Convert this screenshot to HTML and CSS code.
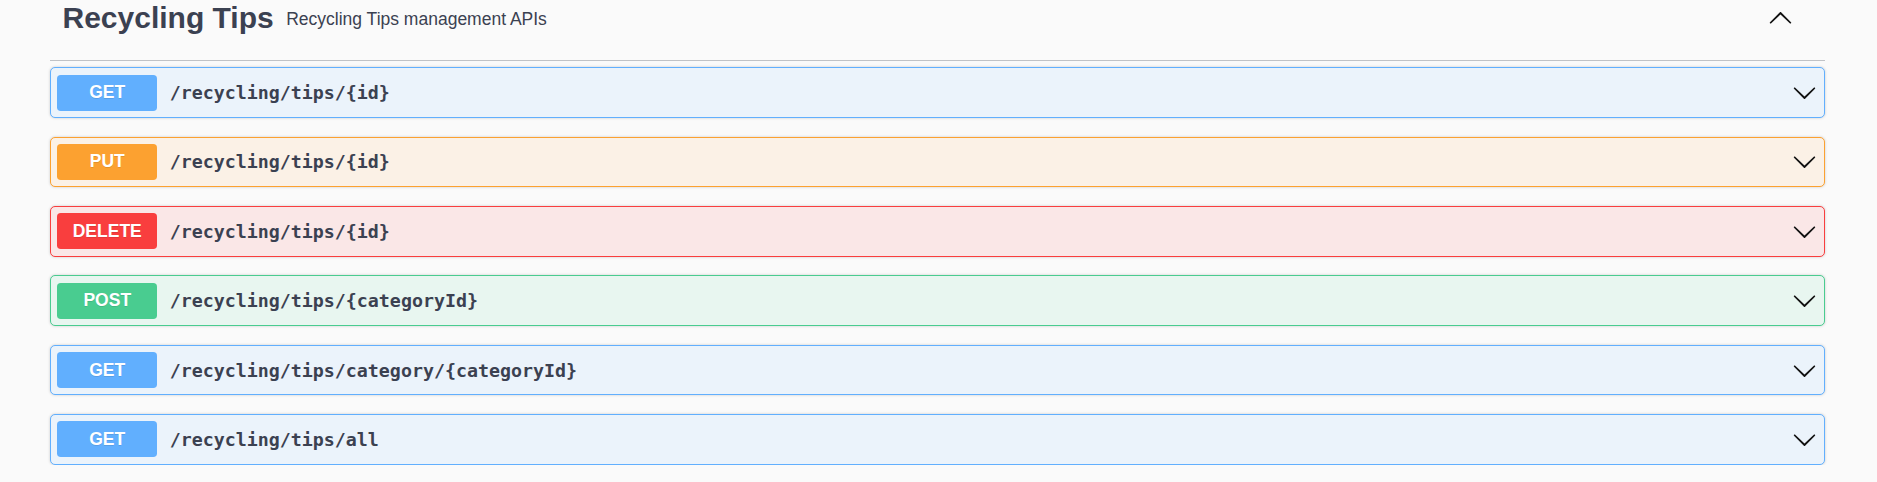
FILE: index.html
```html
<!DOCTYPE html>
<html>
<head>
<meta charset="utf-8">
<link rel="stylesheet" href="styles.css">
</head>
<body>
<div class="wrapper">
  <h3 class="tag">
    <span class="tag-name">Recycling Tips</span>
    <small class="tag-desc">Recycling Tips management APIs</small>
    <button class="expand">
      <svg class="arrow up" width="25" height="25" viewBox="0 0 20 20"><path d="M17.418 6.109c.272-.268.709-.268.979 0s.271.701 0 .969l-7.908 7.830c-.27.268-.707.268-.979 0l-7.908-7.83c-.27-.268-.27-.701 0-.969.271-.268.709-.268.979 0L10 13.25l7.418-7.141z"/></svg>
    </button>
  </h3>
  <div class="ops">
    <div class="op get">
      <span class="method">GET</span>
      <span class="path">/recycling/tips/{id}</span>
      <svg class="arrow" width="25" height="25" viewBox="0 0 20 20"><path d="M17.418 6.109c.272-.268.709-.268.979 0s.271.701 0 .969l-7.908 7.83c-.27.268-.707.268-.979 0l-7.908-7.83c-.27-.268-.27-.701 0-.969.271-.268.709-.268.979 0L10 13.25l7.418-7.141z"/></svg>
    </div>
    <div class="op put">
      <span class="method">PUT</span>
      <span class="path">/recycling/tips/{id}</span>
      <svg class="arrow" width="25" height="25" viewBox="0 0 20 20"><path d="M17.418 6.109c.272-.268.709-.268.979 0s.271.701 0 .969l-7.908 7.83c-.27.268-.707.268-.979 0l-7.908-7.83c-.27-.268-.27-.701 0-.969.271-.268.709-.268.979 0L10 13.25l7.418-7.141z"/></svg>
    </div>
    <div class="op delete">
      <span class="method">DELETE</span>
      <span class="path">/recycling/tips/{id}</span>
      <svg class="arrow" width="25" height="25" viewBox="0 0 20 20"><path d="M17.418 6.109c.272-.268.709-.268.979 0s.271.701 0 .969l-7.908 7.83c-.27.268-.707.268-.979 0l-7.908-7.83c-.27-.268-.27-.701 0-.969.271-.268.709-.268.979 0L10 13.25l7.418-7.141z"/></svg>
    </div>
    <div class="op post">
      <span class="method">POST</span>
      <span class="path">/recycling/tips/{categoryId}</span>
      <svg class="arrow" width="25" height="25" viewBox="0 0 20 20"><path d="M17.418 6.109c.272-.268.709-.268.979 0s.271.701 0 .969l-7.908 7.83c-.27.268-.707.268-.979 0l-7.908-7.83c-.27-.268-.27-.701 0-.969.271-.268.709-.268.979 0L10 13.25l7.418-7.141z"/></svg>
    </div>
    <div class="op get">
      <span class="method">GET</span>
      <span class="path">/recycling/tips/category/{categoryId}</span>
      <svg class="arrow" width="25" height="25" viewBox="0 0 20 20"><path d="M17.418 6.109c.272-.268.709-.268.979 0s.271.701 0 .969l-7.908 7.83c-.27.268-.707.268-.979 0l-7.908-7.83c-.27-.268-.27-.701 0-.969.271-.268.709-.268.979 0L10 13.25l7.418-7.141z"/></svg>
    </div>
    <div class="op get">
      <span class="method">GET</span>
      <span class="path">/recycling/tips/all</span>
      <svg class="arrow" width="25" height="25" viewBox="0 0 20 20"><path d="M17.418 6.109c.272-.268.709-.268.979 0s.271.701 0 .969l-7.908 7.83c-.27.268-.707.268-.979 0l-7.908-7.83c-.27-.268-.27-.701 0-.969.271-.268.709-.268.979 0L10 13.25l7.418-7.141z"/></svg>
    </div>
  </div>
</div>
</body>
</html>
```

FILE: styles.css
```css
html, body {
  margin: 0;
  padding: 0;
  background: #fafafa;
  color: #3b4151;
  font-family: "Liberation Sans", Arial, sans-serif;
}

.wrapper {
  padding: 0 52px 0 50px;
}

.tag {
  display: flex;
  align-items: center;
  margin: 0 0 6.25px 0;
  padding: 0 32px 24px 12.5px;
  height: 36px;
  box-sizing: content-box;
  border-bottom: 1px solid rgba(59, 65, 81, 0.3);
  font-size: 30px;
  font-weight: 700;
  color: #3b4151;
}

.tag-name {
  line-height: 34.5px;
}

.tag-desc {
  flex: 1;
  padding: 0 12.5px 0 12.5px;
  font-size: 17.5px;
  font-weight: 400;
  line-height: 20px;
  position: relative;
  top: 0.5px;
}

.expand {
  border: 0;
  background: none;
  padding: 0;
  margin: 0;
  display: flex;
}

.arrow {
  display: block;
  fill: #111;
}

.arrow.up {
  transform: rotate(180deg);
}

.ops {
  display: flex;
  flex-direction: column;
  gap: 18.9px;
}

.op {
  display: flex;
  align-items: center;
  padding: 6.25px 7px 6.25px 6.25px;
  border: 1px solid;
  border-radius: 5px;
  box-shadow: 0 0 3px rgba(0, 0, 0, 0.19);
}

.method {
  min-width: 100px;
  padding: 7.5px 0;
  line-height: 21px;
  border-radius: 3.75px;
  text-align: center;
  color: #fff;
  font-size: 17.5px;
  font-weight: 700;
  text-shadow: 0 1px 0 rgba(0, 0, 0, 0.1);
}

.path {
  flex: 1;
  padding: 0 12.5px;
  font-family: "DejaVu Sans Mono", "Liberation Mono", monospace;
  font-size: 18.3px;
  font-weight: 700;
  color: #3b4151;
}

.get { background: #ebf3fb; border-color: #61affe; }
.get .method { background: #61affe; }
.put { background: #fbf1e6; border-color: #fca130; }
.put .method { background: #fca130; }
.delete { background: #fae7e7; border-color: #f93e3e; }
.delete .method { background: #f93e3e; }
.post { background: #e8f6f0; border-color: #49cc90; }
.post .method { background: #49cc90; }
```
